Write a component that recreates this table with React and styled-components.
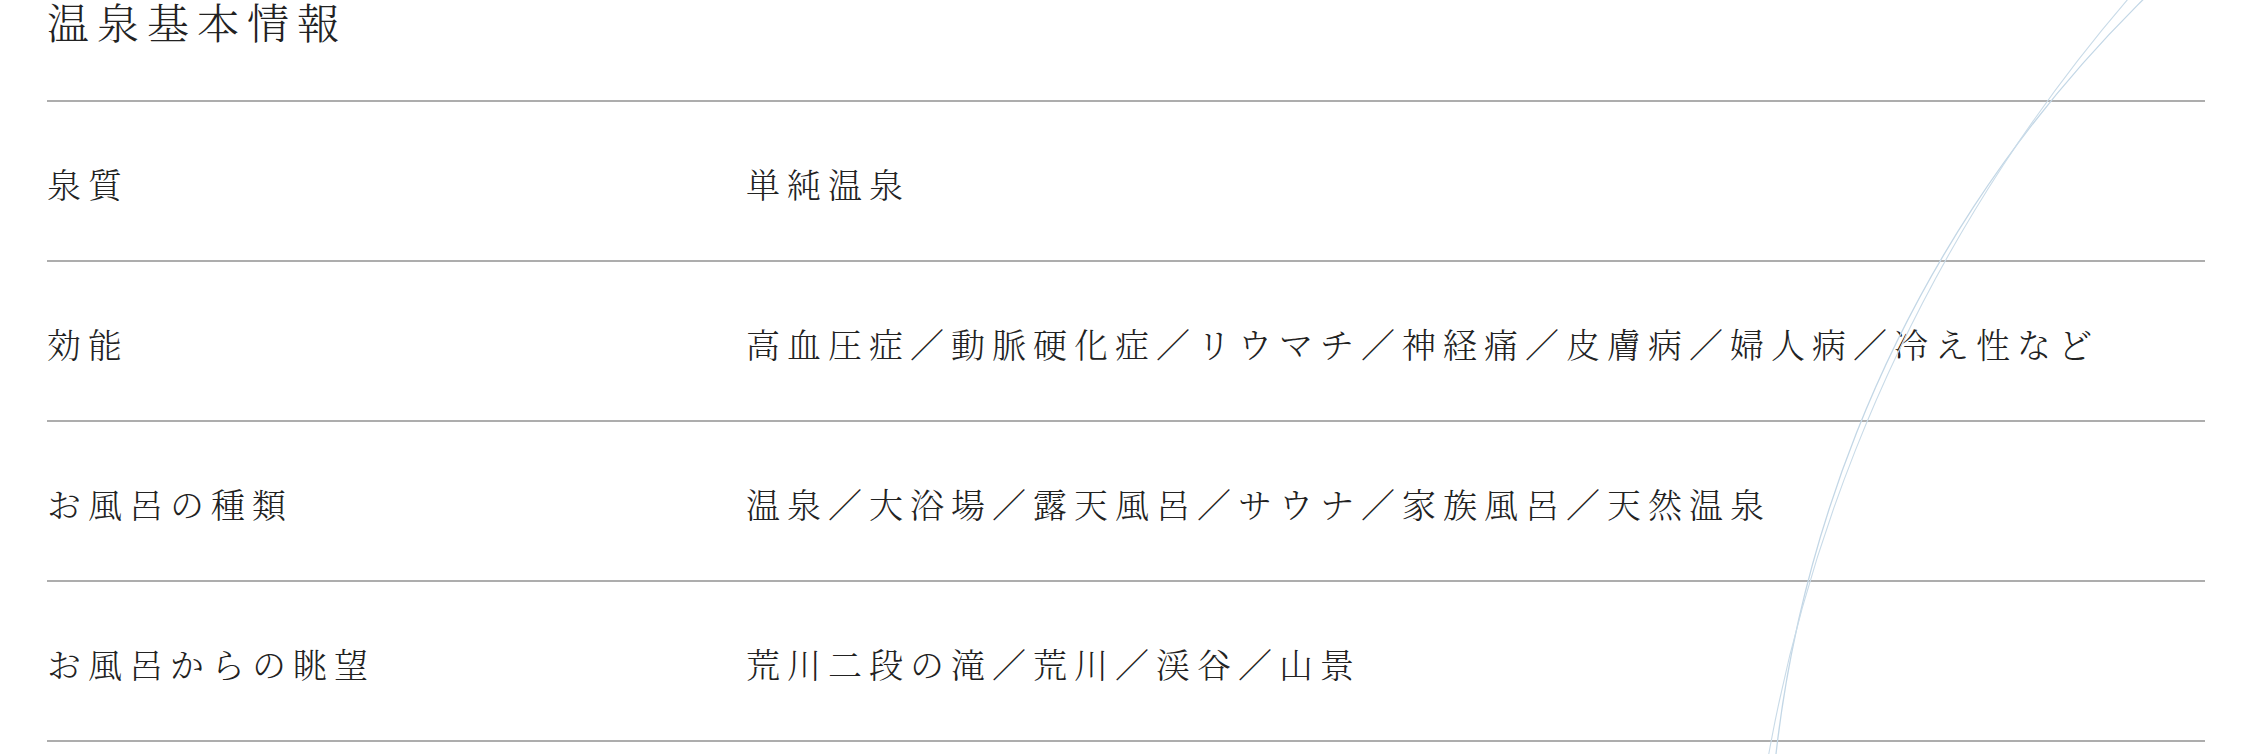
import React from "react";
import styled, { createGlobalStyle } from "styled-components";

const Global = createGlobalStyle`
  html, body {
    margin: 0;
    padding: 0;
    background: #ffffff;
  }
  body {
    font-family: "Noto Serif CJK JP", "Noto Sans CJK JP", "Noto Sans", sans-serif;
    color: #222222;
    overflow: hidden;
  }
`;

const Page = styled.section`
  position: relative;
  width: 2258px;
  height: 754px;
  box-sizing: border-box;
  padding: 0 53px 0 47px;
  overflow: hidden;
`;

const Title = styled.h2`
  margin: 0 0 58px;
  font-size: 42px;
  line-height: 42px;
  font-weight: 300;
  letter-spacing: 8px;
  color: #222222;
`;

const List = styled.dl`
  margin: 0;
  border-top: 2px solid #adadad;
`;

const Row = styled.div`
  display: grid;
  grid-template-columns: 699px 1fr;
  align-items: start;
  box-sizing: border-box;
  height: 160px;
  padding-top: 65px;
  border-bottom: 2px solid #adadad;
`;

const Label = styled.dt`
  margin: 0;
  font-size: 34px;
  line-height: 34px;
  font-weight: 300;
  letter-spacing: 7px;
  white-space: nowrap;
`;

const Value = styled.dd`
  margin: 0;
  font-size: 34px;
  line-height: 34px;
  font-weight: 300;
  letter-spacing: 7px;
  white-space: nowrap;
`;

const Ripple = styled.svg`
  position: absolute;
  top: 0;
  left: 0;
  pointer-events: none;
`;

const rows = [
  ["泉質", "単純温泉"],
  ["効能", "高血圧症／動脈硬化症／リウマチ／神経痛／皮膚病／婦人病／冷え性など"],
  ["お風呂の種類", "温泉／大浴場／露天風呂／サウナ／家族風呂／天然温泉"],
  ["お風呂からの眺望", "荒川二段の滝／荒川／渓谷／山景"],
];

export default function App() {
  return (
    <>
      <Global />
      <Page>
        <Title>温泉基本情報</Title>
        <List>
          {rows.map(([k, v]) => (
            <Row key={k}>
              <Label>{k}</Label>
              <Value>{v}</Value>
            </Row>
          ))}
        </List>
        <Ripple width="2258" height="754" viewBox="0 0 2258 754" aria-hidden="true">
          <circle cx="3029" cy="897" r="1261" fill="none" stroke="#c3d7e6" strokeWidth="1.3" />
          <circle cx="3335.5" cy="1036.6" r="1592" fill="none" stroke="#c9dbe8" strokeWidth="1.1" />
        </Ripple>
      </Page>
    </>
  );
}
